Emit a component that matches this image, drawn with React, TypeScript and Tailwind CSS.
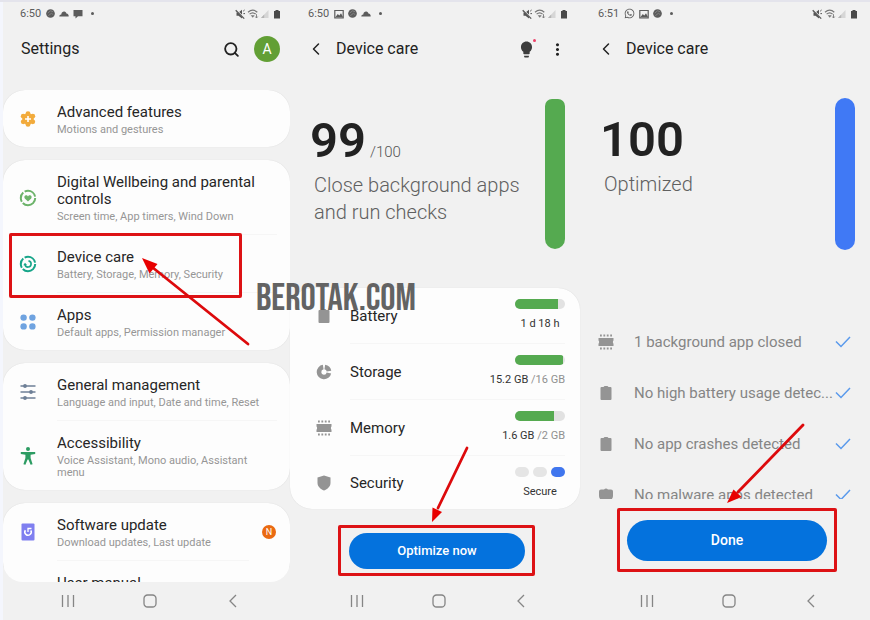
import type { ReactNode } from 'react';
import clsx from 'clsx';
import { MdLightbulb, MdMoreVert } from 'react-icons/md';
import { FaWhatsapp } from 'react-icons/fa';
import { Search, ChevronLeft } from 'lucide-react';

function BallIcon() {
  return (
    <svg viewBox="0 0 10 10" className="h-[9px] w-[9px]">
      <circle cx="5" cy="5" r="4.8" fill="#5c5c5c" />
      <path d="M2 4.5 5 2l3 1M2.5 7.5 6 4.8l2 1.4" fill="none" stroke="#8a8a8a" strokeWidth="0.9" />
    </svg>
  );
}

function CloudIcon() {
  return (
    <svg viewBox="0 0 10 10" className="h-[10px] w-[10px]">
      <path d="M.3 7.500C.3 6 1.300 5.300 2.300 5.400 2.500 3.400 4 2.400 5.300 2.600 6.500 2.700 7.200 3.700 7.400 4.600 9 4.600 9.800 6 9.700 7.500Z" fill="#5c5c5c" />
    </svg>
  );
}

function ChatIcon() {
  return (
    <svg viewBox="0 0 10 10" className="h-[10px] w-[10px]">
      <path d="M.5 1h9v6.300H5L2.500 9.500V7.300h-2Z" fill="#5c5c5c" />
    </svg>
  );
}

function PhotoIcon() {
  return (
    <svg viewBox="0 0 10 10" className="h-[10px] w-[10px]">
      <path d="M.8 1.500h8.400v7.300H.8Z" fill="none" stroke="#5c5c5c" strokeWidth="1.200" />
      <path d="M1.500 8 3.800 5l1.500 1.500L7 4.200 9 8Z" fill="#5c5c5c" />
    </svg>
  );
}

function StatusIcons() {
  return (
    <svg viewBox="0 0 46 12" className="h-3 w-[46px]" aria-hidden="true">
      <g transform="translate(1 1)">
        <path d="M.5 3.500h2L6 .8v8.800L2.500 6.800h-2Z" fill="#555" />
        <path d="M0 .8 8.600 9.400" stroke="#f1f1f1" strokeWidth="1.600" />
        <path d="M-.3 1.200 8.200 9.600" stroke="#555" strokeWidth="1.300" />
        <path d="M7.200 2.200 8.600 1M7.400 4.600h1.600" stroke="#555" strokeWidth="1" />
      </g>
      <path d="M13 4.200c3-2.600 6.500-2.600 9.300 0M14.600 6.100c2-1.700 4.200-1.700 6 0" fill="none" stroke="#777" strokeWidth="1.200" />
      <path d="M15.700 7.300h4L17.700 9.800Z" fill="#777" />
      <path d="M21.500 6.200v3.600M20.300 8.600l1.200 1.400 1.200-1.400" fill="none" stroke="#777" strokeWidth="0.900" />
      <path d="M26 10 33.500 2V10Z" fill="#d6d6d6" />
      <path d="M26 10 29.200 6.600V10Z" fill="#b5b5b5" />
      <path d="M39 3h1.500V2h3v1H45v7.500H39Z" fill="#4a4a4a" />
    </svg>
  );
}

function StatusBar({ time, children, className }: { time: string; children: ReactNode; className: string }) {
  return (
    <div className={clsx('flex h-[23px] shrink-0 items-center text-[#5c5c5c]', className)}>
      <span className="text-[11px] leading-4">{time}</span>
      <div className="ml-[5px] flex flex-1 items-center gap-1">
        {children}
        <span className="ml-1 h-[3px] w-[3px] rounded-full bg-[#5c5c5c]" />
      </div>
      <StatusIcons />
    </div>
  );
}

function NavBar({ className }: { className: string }) {
  return (
    <nav className={clsx('grid h-[38px] shrink-0 grid-cols-3 items-center justify-items-center', className)}>
      <button aria-label="Recent apps">
        <svg viewBox="0 0 14 14" className="h-[14px] w-[14px]" stroke="#858585" strokeWidth="1.300">
          <path d="M1.500 1v12M7 1v12M12.500 1v12" />
        </svg>
      </button>
      <button aria-label="Home">
        <svg viewBox="0 0 14 14" className="h-[14px] w-[14px]" fill="none" stroke="#858585" strokeWidth="1.300">
          <rect x="1" y="1" width="12" height="12" rx="3.600" />
        </svg>
      </button>
      <button aria-label="Back">
        <svg viewBox="0 0 14 14" className="h-[14px] w-[14px]" fill="none" stroke="#858585" strokeWidth="1.300">
          <path d="M10 1 4 7l6 6" />
        </svg>
      </button>
    </nav>
  );
}

function BatteryIcon() {
  return (
    <svg viewBox="0 0 16 16" className="h-4 w-4">
      <path d="M3.500 2h2l1-1h3l1 1h2q1 0 1 1v11q0 1-1 1h-9q-1 0-1-1V3q0-1 1-1Z" fill="#949494" />
    </svg>
  );
}

function StorageIcon() {
  return (
    <svg viewBox="0 0 16 16" className="h-4 w-4" fill="none" stroke="#949494" strokeWidth="4.600">
      <path d="M8.800 3A5 5 0 0 1 13 7.200" />
      <path d="M12.900 9A5 5 0 1 1 7.200 3.100" />
    </svg>
  );
}

function MemoryIcon() {
  return (
    <svg viewBox="0 0 16 16" className="h-4 w-4">
      <path d="M.5 4h15v2.500q-.6 0-.6 1.500t.6 1.500V12H.5V9.500Q1.100 9.500 1.100 8T.5 6.500Z" fill="#949494" />
      <path d="M2 1.600h12M2 14.400h12" stroke="#949494" strokeWidth="2" strokeDasharray="1.800 1.600" />
    </svg>
  );
}

function ShieldIcon() {
  return (
    <svg viewBox="0 0 16 16" className="h-4 w-4">
      <path d="M8 .5 14.500 2.500V8c0 3.500-3 6-6.500 7.500C4.500 14 1.500 11.500 1.500 8V2.500Z" fill="#949494" />
    </svg>
  );
}

function MalwareIcon() {
  return (
    <svg viewBox="0 0 16 16" className="h-4 w-4">
      <path d="M3 2.500h3q2-2 4 0h3q2 0 2 2V9c0 3-3 5.500-7 6.500C4 14.500 1 12 1 9V4.500q0-2 2-2Z" fill="#949494" />
    </svg>
  );
}

function FlowerIcon() {
  return (
    <svg viewBox="0 0 16 16" className="h-4 w-4">
      <g fill="#f2ab3c">
        <circle cx="8" cy="2.600" r="2.400" />
        <circle cx="12.800" cy="5.200" r="2.400" />
        <circle cx="12.800" cy="10.800" r="2.400" />
        <circle cx="8" cy="13.400" r="2.400" />
        <circle cx="3.200" cy="10.800" r="2.400" />
        <circle cx="3.200" cy="5.200" r="2.400" />
        <circle cx="8" cy="8" r="5.800" />
      </g>
      <path d="M8 5v6M5 8h6" stroke="#fff" strokeWidth="1.600" />
    </svg>
  );
}

function WellbeingIcon() {
  return (
    <svg viewBox="0 0 18 18" className="h-[18px] w-[18px]">
      <circle cx="9" cy="9" r="7.200" fill="none" stroke="#6cb36a" strokeWidth="2" strokeDasharray="17 1.600 10 1.600 13.400 1.640" />
      <path d="M9 12.600 5.800 9.400C4.800 8 5.600 6.300 7.100 6.300 8 6.300 8.600 6.800 9 7.400 9.400 6.800 10 6.300 10.900 6.300 12.400 6.300 13.200 8 12.200 9.400Z" fill="#6cb36a" />
    </svg>
  );
}

function CareIcon() {
  return (
    <svg viewBox="0 0 18 18" className="h-[18px] w-[18px]" fill="none" stroke="#17a589">
      <circle cx="9" cy="9" r="7.200" strokeWidth="2" strokeDasharray="17 1.600 10 1.600 13.400 1.640" />
      <path d="M9.500 5.900a3.100 3.100 0 1 1-3.500 3.800" strokeWidth="1.600" />
      <path d="M4.300 10.200 6 7.800l2 2.200Z" fill="#17a589" stroke="none" />
    </svg>
  );
}

function AppsIcon() {
  return (
    <svg viewBox="0 0 16 16" className="h-4 w-4" fill="#6fa3e0">
      <circle cx="3.600" cy="3.600" r="3.200" />
      <circle cx="12.400" cy="3.600" r="3.200" />
      <circle cx="3.600" cy="12.400" r="3.200" />
      <circle cx="12.400" cy="12.400" r="3.200" />
    </svg>
  );
}

function SlidersIcon() {
  return (
    <svg viewBox="0 0 16 16" className="h-4 w-4" stroke="#6d7f96" strokeWidth="1.700" fill="#6d7f96">
      <path d="M.5 2h15M.5 8h15M.5 14h15" />
      <g stroke="none">
        <circle cx="5" cy="2" r="1.900" />
        <circle cx="11" cy="8" r="1.900" />
        <circle cx="5" cy="14" r="1.900" />
      </g>
    </svg>
  );
}

function AccessibilityIcon() {
  return (
    <svg viewBox="0 0 16 18" className="h-[18px] w-4" fill="#2d9c63">
      <circle cx="8" cy="2" r="2" />
      <path d="M.8 5h14.400v2L10.600 7.800V11l2 6.200-2 .6L8.400 12.500h-.8L5.400 17.800l-2-.6 2-6.200V7.800L.8 7Z" />
    </svg>
  );
}

function UpdateIcon() {
  return (
    <svg viewBox="0 0 14 18" className="h-[18px] w-[14px]">
      <rect x=".5" y=".5" width="13" height="17" rx="1" fill="#7f7ff0" />
      <path d="M4.400 7.200A3.200 3.200 0 1 0 9.800 7.400" fill="none" stroke="#fff" strokeWidth="1.500" />
      <path d="M10.500 5.500H7v3.600" fill="none" stroke="#fff" strokeWidth="1.300" />
    </svg>
  );
}

function ManualIcon() {
  return (
    <svg viewBox="0 0 16 18" className="h-[18px] w-4">
      <rect x=".5" y="1" width="15" height="16" rx="1" fill="#ecc06a" />
    </svg>
  );
}

function CheckIcon() {
  return (
    <svg viewBox="0 0 16 12" className="h-3 w-4 shrink-0" fill="none" stroke="#5a9aec" strokeWidth="1.500">
      <path d="m1 5.500 5 5L15 1" />
    </svg>
  );
}

interface SettingItem {
  title: string;
  subtitle?: string;
  icon: ReactNode;
  badge?: string;
  marked?: boolean;
}

const SETTINGS: SettingItem[][] = [
  [{ title: 'Advanced features', subtitle: 'Motions and gestures', icon: <FlowerIcon /> }],
  [
    {
      title: 'Digital Wellbeing and parental controls',
      subtitle: 'Screen time, App timers, Wind Down',
      icon: <WellbeingIcon />,
    },
    { title: 'Device care', subtitle: 'Battery, Storage, Memory, Security', icon: <CareIcon />, marked: true },
    { title: 'Apps', subtitle: 'Default apps, Permission manager', icon: <AppsIcon /> },
  ],
  [
    { title: 'General management', subtitle: 'Language and input, Date and time, Reset', icon: <SlidersIcon /> },
    { title: 'Accessibility', subtitle: 'Voice Assistant, Mono audio, Assistant menu', icon: <AccessibilityIcon /> },
  ],
  [
    { title: 'Software update', subtitle: 'Download updates, Last update', icon: <UpdateIcon />, badge: 'N' },
    { title: 'User manual', icon: <ManualIcon /> },
  ],
];

function SettingRow({ item, last }: { item: SettingItem; last: boolean }) {
  return (
    <li className="relative flex items-center">
      <span className="flex w-[50px] shrink-0 justify-center">{item.icon}</span>
      <div
        className={clsx(
          'ml-1 mr-[13px] flex-1 pt-[14px]',
          item.subtitle ? 'pb-[11px]' : 'pb-7',
          !last && 'border-b border-[#f6f6f6]',
        )}
      >
        <p className="max-w-[210px] text-[15px] leading-[17px] text-[#262626]">{item.title}</p>
        {item.subtitle && (
          <p className="mt-[3px] max-w-[210px] text-[11px] leading-3 text-[#969696]">{item.subtitle}</p>
        )}
      </div>
      {item.badge && (
        <span className="mr-[14px] flex h-[14px] w-[14px] items-center justify-center rounded-full bg-[#ea6a12] text-[9px] leading-none text-white">
          {item.badge}
        </span>
      )}
      {item.marked && (
        <>
          <div className="absolute -top-[2px] left-[6px] h-[65px] w-[233px] rounded-[2px] border-[3px] border-[#dd1215]" />
          <svg viewBox="0 0 110 90" className="absolute left-[137px] top-[22px] z-10 h-[90px] w-[110px]">
            <path d="M108 87 12 10" stroke="#dd0a0c" strokeWidth="2.800" strokeLinecap="round" />
            <path d="M2 1 17.500 7 9.500 16.500Z" fill="#e80000" />
          </svg>
        </>
      )}
    </li>
  );
}

function SettingsPhone() {
  return (
    <section className="flex min-h-0 flex-col border-l-[3px] border-[#f4f6fd]">
      <StatusBar time="6:50" className="pl-[17px] pr-[9px]">
        <BallIcon />
        <CloudIcon />
        <ChatIcon />
      </StatusBar>
      <header className="flex h-12 shrink-0 items-center pl-[18px] pr-[10px]">
        <h1 className="flex-1 text-[16px] leading-5 text-[#222]">Settings</h1>
        <button aria-label="Search" className="mr-[14px]">
          <Search size={17} strokeWidth={2.6} color="#222" />
        </button>
        <button className="flex h-[26px] w-[26px] items-center justify-center rounded-full bg-[#629f35] text-[14px] text-white">
          A
        </button>
      </header>
      <div className="mt-[17px] min-h-0 flex-1 overflow-hidden rounded-b-[20px]">
        <div className="flex flex-col gap-[13px]">
          {SETTINGS.map((group) => (
            <ul key={group[0].title} className="rounded-[22px] bg-[#fdfdfd] shadow-[0_0_1px_rgba(0,0,0,0.15)]">
              {group.map((item, i) => (
                <SettingRow key={item.title} item={item} last={i === group.length - 1} />
              ))}
            </ul>
          ))}
        </div>
      </div>
      <NavBar className="pl-6 pr-4" />
    </section>
  );
}

function CareHeader({ children }: { children?: ReactNode }) {
  return (
    <header className="flex h-12 shrink-0 items-center pl-4 pr-[13px]">
      <button aria-label="Back">
        <ChevronLeft size={20} strokeWidth={1.8} color="#222" />
      </button>
      <h1 className="ml-[10px] flex-1 text-[16px] leading-5 text-[#222]">Device care</h1>
      {children}
    </header>
  );
}

function Score({ value, total, caption, barClass, className }: {
  value: string;
  total?: string;
  caption: string;
  barClass: string;
  className: string;
}) {
  return (
    <div className={clsx('flex shrink-0 justify-between pl-5 pr-[15px]', className)}>
      <div className="pt-[17px]">
        <p className="text-[49px] font-semibold leading-[50px] text-[#222]">
          {value}
          {total && <span className="ml-1 text-[15px] font-light leading-5 text-[#555]">{total}</span>}
        </p>
        <p className="mt-[6px] max-w-[215px] pl-1 text-[20px] font-light leading-[27px] text-[#606060]">{caption}</p>
      </div>
      <div className={clsx('w-5 shrink-0', barClass)} />
    </div>
  );
}

const USAGE = [
  { name: 'Battery', icon: <BatteryIcon />, percent: 85, used: '1 d 18 h', total: '' },
  { name: 'Storage', icon: <StorageIcon />, percent: 96, used: '15.2 GB', total: '/16 GB' },
  { name: 'Memory', icon: <MemoryIcon />, percent: 77, used: '1.6 GB', total: '/2 GB' },
];

function UsageRow({ name, icon, children, last }: {
  name: string;
  icon: ReactNode;
  children: ReactNode;
  last?: boolean;
}) {
  return (
    <li className={clsx('flex items-center pl-[26px] pr-[15px]', last ? 'h-[53px]' : 'h-14')}>
      {icon}
      <div className={clsx('ml-[18px] flex h-full flex-1 items-center', !last && 'border-b border-[#f6f6f6]')}>
        <span className="flex-1 text-[15px] leading-5 text-[#262626]">{name}</span>
        <div className="flex h-full flex-col items-end pt-[11px]">{children}</div>
      </div>
    </li>
  );
}

function CarePhone() {
  return (
    <section className="flex min-h-0 flex-col">
      <StatusBar time="6:50" className="pl-[18px] pr-3">
        <PhotoIcon />
        <BallIcon />
        <CloudIcon />
      </StatusBar>
      <CareHeader>
        <button aria-label="Tips" className="relative mr-3">
          <MdLightbulb size={19} color="#3c3c3c" />
          <span className="absolute right-0 -top-px h-[3px] w-[3px] rounded-full bg-[#ee4068]" />
        </button>
        <button aria-label="More options">
          <MdMoreVert size={19} color="#222" />
        </button>
      </CareHeader>
      <Score
        value="99"
        total="/100"
        caption="Close background apps and run checks"
        barClass="h-[150px] rounded-t-[7px] rounded-b-[10px] bg-[#55aa50]"
        className="pb-[39px] pt-[26px]"
      />
      <ul className="rounded-[22px] bg-[#fdfdfd] shadow-[0_0_1px_rgba(0,0,0,0.15)]">
        {USAGE.map((row) => (
          <UsageRow key={row.name} name={row.name} icon={row.icon}>
            <div className="h-[10px] w-[50px] overflow-hidden rounded-full bg-[#e2e2e2]">
              <div className="h-full bg-[#55aa50]" style={{ width: `${row.percent}%` }} />
            </div>
            <p className="mt-2 min-w-[50px] text-center text-[11px] leading-[14px] text-[#333]">
              {row.used} {row.total && <span className="text-[#909090]">{row.total}</span>}
            </p>
          </UsageRow>
        ))}
        <UsageRow name="Security" icon={<ShieldIcon />} last>
          <div className="flex w-[50px] justify-between">
            <span className="h-[10px] w-[14px] rounded-full bg-[#e5e5e5]" />
            <span className="h-[10px] w-[14px] rounded-full bg-[#e5e5e5]" />
            <span className="h-[10px] w-[14px] rounded-full bg-[#4076ee]" />
          </div>
          <p className="mt-2 min-w-[50px] text-center text-[11px] leading-[14px] text-[#333]">Secure</p>
        </UsageRow>
      </ul>
      <div className="relative ml-12 mr-[45px] mt-4 rounded-[2px] border-[3px] border-[#dd1215] pb-1 pl-2 pr-[7px] pt-[5px]">
        <button className="h-9 w-full rounded-full bg-[#0472dd] text-[13px] font-medium text-white">Optimize now</button>
        <svg viewBox="0 0 40 78" className="absolute -top-[83px] left-[89px] h-[78px] w-10">
          <path d="M37 3 8 63" stroke="#dd0a0c" strokeWidth="2.800" strokeLinecap="round" />
          <path d="M2 77 2.500 62.500 12 67Z" fill="#e80000" />
        </svg>
      </div>
      <div className="flex-1" />
      <NavBar className="pl-[26px] pr-[18px]" />
    </section>
  );
}

const RESULTS = [
  { text: '1 background app closed', icon: <MemoryIcon /> },
  { text: 'No high battery usage detec...', icon: <BatteryIcon /> },
  { text: 'No app crashes detected', icon: <BatteryIcon /> },
  { text: 'No malware apps detected', icon: <MalwareIcon /> },
];

function OptimizedPhone() {
  return (
    <section className="flex min-h-0 flex-col">
      <StatusBar time="6:51" className="pl-[18px] pr-3">
        <FaWhatsapp size={11} />
        <PhotoIcon />
        <BallIcon />
      </StatusBar>
      <CareHeader />
      <Score
        value="100"
        caption="Optimized"
        barClass="h-[152px] rounded-full bg-[#4079f5]"
        className="pb-[66px] pt-[25px]"
      />
      <ul className="min-h-0 flex-1 overflow-hidden">
        {RESULTS.map((row) => (
          <li key={row.text} className="flex h-[51px] items-center pl-[18px] pr-[19px]">
            {row.icon}
            <span className="ml-5 flex-1 whitespace-nowrap text-[15px] leading-5 text-[#858585]">{row.text}</span>
            <CheckIcon />
          </li>
        ))}
      </ul>
      <div className="relative mb-[10px] ml-[37px] mr-[33px] mt-[9px] rounded-[2px] border-[3px] border-[#dd1215] px-[7px] pb-2 pt-[9px]">
        <button className="h-[41px] w-full rounded-full bg-[#0472dd] text-[14px] font-medium text-white">Done</button>
        <svg viewBox="0 0 80 84" className="absolute -top-[90px] left-[107px] h-[84px] w-20">
          <path d="M76 4 11 71" stroke="#dd0a0c" strokeWidth="2.800" strokeLinecap="round" />
          <path d="M0 82 6.500 68.500 14.500 76Z" fill="#e80000" />
        </svg>
      </div>
      <NavBar className="pl-[26px] pr-[18px]" />
    </section>
  );
}

export default function App() {
  return (
    <main className="relative grid h-screen grid-cols-3 grid-rows-1 overflow-hidden border-t-2 border-[#e4e4ec] bg-[#f1f1f1] font-[Roboto,sans-serif]">
      <SettingsPhone />
      <CarePhone />
      <OptimizedPhone />
      <p className="absolute left-[256px] top-[277px] whitespace-nowrap font-['Bebas_Neue','Roboto_Condensed','Liberation_Sans_Narrow',sans-serif] text-[38px] leading-10 text-[#636363]">
        BEROTAK.COM
      </p>
    </main>
  );
}
